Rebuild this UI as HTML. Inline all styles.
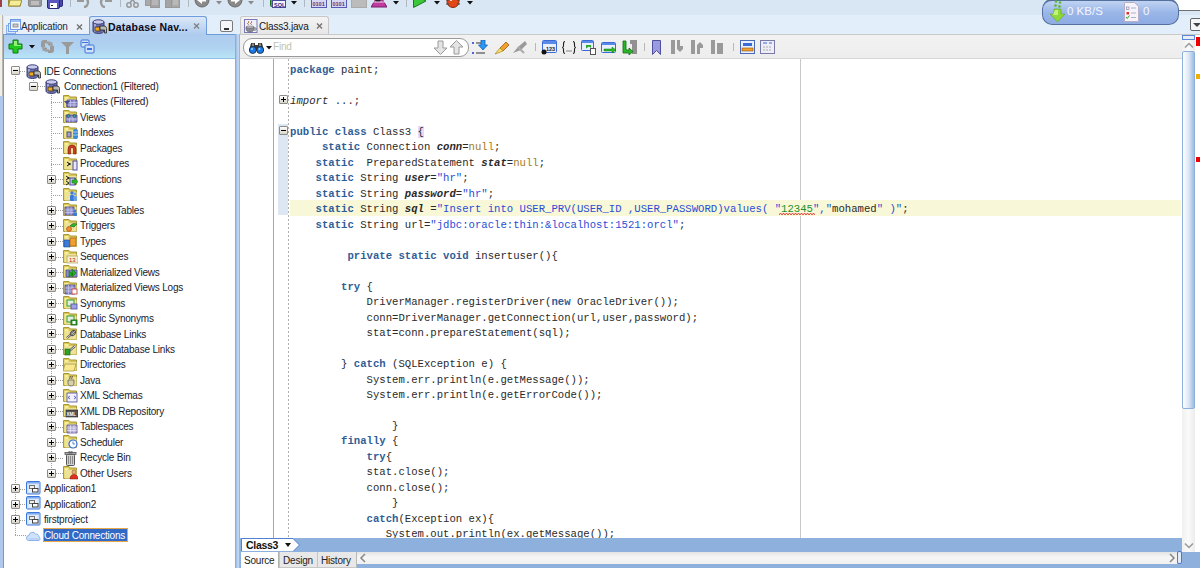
<!DOCTYPE html><html><head><meta charset="utf-8"><style>
*{margin:0;padding:0;box-sizing:border-box}
html,body{width:1200px;height:568px;overflow:hidden;background:#e2eef9;font-family:"Liberation Sans",sans-serif;font-size:10px;color:#000;position:relative}
.a{position:absolute}
.ui{font-family:"Liberation Sans",sans-serif;font-size:10px;letter-spacing:-0.25px;white-space:pre;line-height:12px}
.code{position:absolute;font-family:"Liberation Mono",monospace;font-size:10.63px;white-space:pre;line-height:15.49px;height:15.49px;color:#2a2a2a;left:290px}
.k{color:#2f5e97;font-weight:bold}
.f{font-style:italic;font-weight:bold}
.s{color:#2a4cd6}
.n{color:#a07a1c}
.g{color:#23902e}
.row{position:absolute;height:14px;white-space:pre}
.lbl{position:absolute;font-family:"Liberation Sans",sans-serif;font-size:10px;letter-spacing:-0.2px;white-space:pre;line-height:12px;color:#1a1a2a}
.box{position:absolute;width:9px;height:9px;border:1px solid #8c8c8c;border-radius:1px;background:linear-gradient(#ffffff,#d8d4c8)}
.box:before{content:"";position:absolute;left:1px;top:3px;width:5px;height:1px;background:#000}
.box.p:after{content:"";position:absolute;left:3px;top:1px;width:1px;height:5px;background:#000}
.vd{position:absolute;width:1px;background:repeating-linear-gradient(#a0a0a0 0 1px,transparent 1px 2px)}
.hd{position:absolute;height:1px;background:repeating-linear-gradient(90deg,#a0a0a0 0 1px,transparent 1px 2px)}
</style></head><body>
<div class="a" style="left:0;top:0;width:1200px;height:15px;background:#d9e7f5"></div>
<div class="a" style="left:0;top:15px;width:3px;height:81px;background:#efeee8;border-right:1px solid #b8b8b0"></div>
<div class="a" style="left:0;top:96px;width:3px;height:472px;background:#aec9ec"></div>
<div class="a" style="left:3px;top:15px;width:233px;height:20px;background:#e2eef9"></div>
<div class="a" style="left:3px;top:15px;width:87px;height:20px;background:linear-gradient(#eef3fa,#e6eef8);border:1px solid #dbe5f1;border-bottom:none;border-radius:3px 3px 0 0"></div>
<div class="lbl" style="left:21px;top:21px;color:#1c2a44">Application</div>
<svg class="a" style="left:76px;top:24px" width="7" height="6" viewBox="0 0 7 6"><path d="M1 0.5l5 5M6 0.5l-5 5" stroke="#707070" stroke-width="1.3"/></svg>
<div class="a" style="left:89px;top:16px;width:118px;height:20px;background:linear-gradient(#dce8f7,#abc9ee);border:1px solid #6f9cdc;border-bottom:none;border-radius:3px 3px 0 0"></div>
<div class="lbl" style="left:108px;top:21px;font-weight:bold;font-size:10.5px;letter-spacing:0.2px;color:#0a0a1a">Database Nav...</div>
<svg class="a" style="left:193px;top:23px" width="7" height="6" viewBox="0 0 7 6"><path d="M1 0.5l5 5M6 0.5l-5 5" stroke="#808080" stroke-width="1.3"/></svg>
<div class="a" style="left:220px;top:20px;width:13px;height:12px;border:1px solid #7a7a7a;border-radius:2px;background:#f4f6f9"></div>
<div class="a" style="left:224px;top:28px;width:5px;height:2px;background:#333"></div>
<div class="a" style="left:3px;top:34px;width:233px;height:25px;background:linear-gradient(#aecbee,#b0d3f1 60%,#b8e5f6);border-left:1px solid #6b9bd9;border-bottom:1px solid #92bde6"></div>
<div class="a" style="left:3px;top:34px;width:87px;height:1px;background:#6b9bd9"></div>
<div class="a" style="left:206px;top:34px;width:30px;height:1px;background:#6b9bd9"></div>
<div class="a" style="left:3px;top:59px;width:233px;height:509px;background:#fff;border-left:1px solid #6b9bd9"></div>
<div class="a" style="left:235px;top:34px;width:5px;height:534px;background:linear-gradient(90deg,#7aa3df,#b4cdf0 50%,#c7d9f1);border-right:1px solid #a9b3bf"></div>
<div class="a" style="left:240px;top:15px;width:960px;height:20px;background:#e2eef9"></div>
<div class="a" style="left:240px;top:16px;width:89px;height:19px;background:linear-gradient(#f4f4f4,#e6e6e6);border:1px solid #c8c8c8;border-bottom:none;border-radius:3px 3px 0 0"></div>
<div class="lbl" style="left:259px;top:21px;color:#101828">Class3.java</div>
<svg class="a" style="left:316px;top:23px" width="7" height="6" viewBox="0 0 7 6"><path d="M1 0.5l5 5M6 0.5l-5 5" stroke="#707070" stroke-width="1.3"/></svg>
<div class="a" style="left:240px;top:34px;width:960px;height:25px;background:linear-gradient(#f2f2f2,#ededed);border-top:1px solid #c9c9c9;border-bottom:1px solid #d6d6d6"></div>
<div class="a" style="left:243px;top:38px;width:226px;height:19px;background:#fff;border:1px solid #9a9a9a;border-radius:9px"></div>
<div class="lbl" style="left:273px;top:41px;color:#c0c4b0">Find</div>
<div class="a" style="left:240px;top:59px;width:942px;height:479px;background:#fff"></div>
<div class="a" style="left:273px;top:59px;width:1px;height:479px;background:#a8a8a8"></div>
<div class="vd" style="left:288px;top:59px;height:479px;background:repeating-linear-gradient(#b0b0b0 0 2px,transparent 2px 4px)"></div>
<div class="a" style="left:800px;top:59px;width:1px;height:479px;background:#c8c8c8"></div>
<div class="a" style="left:290px;top:200px;width:891px;height:16px;background:#f8f8d8"></div>
<div class="a" style="left:278px;top:124px;width:10px;height:91px;background:#dde6f3"></div>
<div class="a" style="left:0;top:59px;width:1182px;height:479px;overflow:hidden">
<div class="code" style="top:3.70px"><span class="k">package</span> paint;</div>
<div class="code" style="top:34.68px"><i>import</i> ...;</div>
<div class="code" style="top:65.66px"><span class="k">public</span> <span class="k">class</span> Class3 <span style="background:#e8d8f8">{</span></div>
<div class="code" style="top:81.15px">     <span class="k">static</span> Connection <span class="f">conn</span>=<span class="n">null</span>;</div>
<div class="code" style="top:96.64px">    <span class="k">static</span>  PreparedStatement <span class="f">stat</span>=<span class="n">null</span>;</div>
<div class="code" style="top:112.13px">    <span class="k">static</span> String <span class="f">user</span>=<span class="s">"hr"</span>;</div>
<div class="code" style="top:127.62px">    <span class="k">static</span> String <span class="f">password</span>=<span class="s">"hr"</span>;</div>
<div class="code" style="top:143.11px">    <span class="k">static</span> String <span class="f">sql</span> =<span class="s">"Insert into USER_PRV(USER_ID ,USER_PASSWORD)values( "</span><span class="g">12345</span><span class="s">","</span>mohamed<span class="s">" )"</span>;</div>
<div class="code" style="top:158.60px">    <span class="k">static</span> String url=<span class="s">"jdbc:oracle:thin:&amp;localhost:1521:orcl"</span>;</div>
<div class="code" style="top:189.58px">         <span class="k">private</span> <span class="k">static</span> <span class="k">void</span> insertuser(){</div>
<div class="code" style="top:220.56px">        <span class="k">try</span> {</div>
<div class="code" style="top:236.05px">            DriverManager.registerDriver(<span class="k">new</span> OracleDriver());</div>
<div class="code" style="top:251.54px">            conn=DriverManager.getConnection(url,user,password);</div>
<div class="code" style="top:267.03px">            stat=conn.prepareStatement(sql);</div>
<div class="code" style="top:298.01px">        } <span class="k">catch</span> (SQLException e) {</div>
<div class="code" style="top:313.50px">            System.err.println(e.getMessage());</div>
<div class="code" style="top:328.99px">            System.err.println(e.getErrorCode());</div>
<div class="code" style="top:359.97px">                }</div>
<div class="code" style="top:375.46px">        <span class="k">finally</span> {</div>
<div class="code" style="top:390.95px">            <span class="k">try</span>{</div>
<div class="code" style="top:406.44px">            stat.close();</div>
<div class="code" style="top:421.93px">            conn.close();</div>
<div class="code" style="top:437.42px">                }</div>
<div class="code" style="top:452.91px">            <span class="k">catch</span>(Exception ex){</div>
<div class="code" style="top:468.40px">               System.out.println(ex.getMessage());</div>
</div>
<div class="box p" style="left:279px;top:95px"></div>
<div class="box" style="left:279px;top:126px"></div>
<svg class="a" style="left:779px;top:212px" width="36" height="4" viewBox="0 0 36 4"><path d="M0 3l1.5-2 1.5 2l1.5-2 1.5 2l1.5-2 1.5 2l1.5-2 1.5 2l1.5-2 1.5 2l1.5-2 1.5 2l1.5-2 1.5 2l1.5-2 1.5 2l1.5-2 1.5 2l1.5-2 1.5 2l1.5-2 1.5 2l1.5-2 1.5 2" stroke="#e02020" stroke-width="0.8" fill="none"/></svg>
<div class="a" style="left:240px;top:538px;width:942px;height:14px;background:#8db0dc"></div>
<svg class="a" style="left:240px;top:537px" width="62" height="16" viewBox="0 0 62 16"><path d="M1.5 1.5H53L59.5 8 53 14.5H1.5z" fill="#fff" stroke="#4f82d2" stroke-width="1"/></svg>
<div class="lbl" style="left:246px;top:539px;font-weight:bold;font-size:10.5px;letter-spacing:-0.3px;color:#111">Class3</div>
<div class="a" style="left:285px;top:543px;width:0;height:0;border-left:3px solid transparent;border-right:3px solid transparent;border-top:4px solid #111"></div>
<div class="a" style="left:240px;top:551px;width:960px;height:17px;background:#8db0dc"></div>
<div class="a" style="left:241px;top:552px;width:38px;height:16px;background:#fff;border-right:1px solid #b0b0b0"></div>
<div class="lbl" style="left:244px;top:555px;color:#222">Source</div>
<div class="a" style="left:279px;top:552px;width:39px;height:16px;background:#e8e8e8;border-left:1px solid #c4c4c4;border-right:1px solid #b8b8b8;border-bottom:1px solid #c8c8c8"></div>
<div class="lbl" style="left:283px;top:555px;color:#222">Design</div>
<div class="a" style="left:317px;top:552px;width:40px;height:16px;background:#e8e8e8;border-left:1px solid #c4c4c4;border-right:1px solid #b8b8b8;border-bottom:1px solid #c8c8c8"></div>
<div class="lbl" style="left:321px;top:555px;color:#222">History</div>
<div class="a" style="left:357px;top:552px;width:820px;height:12px;background:linear-gradient(#e4e4e4,#f6f6f6 45%,#f0f0f0)"></div>
<svg class="a" style="left:359px;top:553px" width="8" height="10" viewBox="0 0 8 10"><path d="M6 1L2 5l4 4" stroke="#8a8a8a" stroke-width="1.6" fill="none"/></svg>
<svg class="a" style="left:1168px;top:553px" width="8" height="10" viewBox="0 0 8 10"><path d="M2 1l4 4-4 4" stroke="#8a8a8a" stroke-width="1.6" fill="none"/></svg>
<div class="a" style="left:1177px;top:551px;width:5px;height:13px;border:1px solid #4a7ad0;border-radius:2px;background:#e4ecf7"></div>
<div class="a" style="left:1182px;top:35px;width:13px;height:517px;background:linear-gradient(90deg,#f0f0f0,#fafafa 50%,#ececec)"></div>
<div class="a" style="left:1182px;top:35px;width:13px;height:5px;border:1px solid #5a88d6;background:#e8eff9"></div>
<div class="a" style="left:1182px;top:51px;width:13px;height:358px;border:1px solid #8fb0da;border-radius:2px;background:linear-gradient(90deg,#ffffff,#dce8f6 50%,#9dbde3)"></div>
<div class="a" style="left:1195px;top:35px;width:5px;height:517px;background:#fff"></div>
<svg class="a" style="left:1184px;top:42px" width="10" height="7" viewBox="0 0 10 7"><path d="M1 5.5l4-4 4 4" stroke="#999" stroke-width="1.5" fill="none"/></svg>
<svg class="a" style="left:1184px;top:542px" width="10" height="7" viewBox="0 0 10 7"><path d="M1 1.5l4 4 4-4" stroke="#999" stroke-width="1.5" fill="none"/></svg>
<div class="a" style="left:1196px;top:37px;width:4px;height:9px;background:#ee0000"></div>
<div class="a" style="left:1196px;top:74px;width:4px;height:5px;background:#f0b000"></div>
<div class="a" style="left:1196px;top:157px;width:4px;height:5px;background:#ee0000"></div>
<div class="vd" style="left:15px;top:76px;height:459px"></div>
<div class="vd" style="left:33px;top:76px;height:5px"></div>
<div class="vd" style="left:51px;top:91px;height:382px"></div>
<div class="hd" style="left:20px;top:71px;width:6px"></div>
<div class="box" style="left:11px;top:66px"></div>
<svg class="a" style="left:26px;top:64px" width="15" height="15" viewBox="0 0 15 15"><path d="M1 3v9c0 1.5 2.5 2.5 5.5 2.5S12 13.5 12 12V3z" fill="#6a6fb0" stroke="#3a3d70"/><ellipse cx="6.5" cy="3" rx="5.5" ry="2.2" fill="#c9cbee" stroke="#3a3d70"/><path d="M3 5v8" stroke="#b8bbe6" stroke-width="1.5"/><rect x="3" y="8" width="5" height="4" fill="#f0a81c" stroke="#333" stroke-width="0.8"/><path d="M8 7h4c1.5 0 2.5 1 2.5 2.5V14h-2v-3H8z" fill="#b8b8b8" stroke="#222" stroke-width="0.8"/></svg>
<div class="lbl" style="left:44px;top:65.5px">IDE Connections</div>
<div class="hd" style="left:38px;top:86px;width:7px"></div>
<div class="box" style="left:29px;top:82px"></div>
<svg class="a" style="left:45px;top:79px" width="15" height="15" viewBox="0 0 15 15"><path d="M1 3v9c0 1.5 2.5 2.5 5.5 2.5S12 13.5 12 12V3z" fill="#6a6fb0" stroke="#3a3d70"/><ellipse cx="6.5" cy="3" rx="5.5" ry="2.2" fill="#c9cbee" stroke="#3a3d70"/><path d="M3 5v8" stroke="#b8bbe6" stroke-width="1.5"/><rect x="3" y="8" width="5" height="4" fill="#f0a81c" stroke="#333" stroke-width="0.8"/><path d="M8 7h4c1.5 0 2.5 1 2.5 2.5V14h-2v-3H8z" fill="#b8b8b8" stroke="#222" stroke-width="0.8"/></svg>
<div class="lbl" style="left:64px;top:81.0px">Connection1 (Filtered)</div>
<div class="hd" style="left:51px;top:102px;width:12px"></div>
<svg class="a" style="left:63px;top:95px" width="15" height="15" viewBox="0 0 15 15"><path d="M0.5 0.5h5.5l1.5 1.5h6v10.5h-13z" fill="#d8c658" stroke="#a89838"/><path d="M1.5 2h4v10h-4z" fill="#f6ee9a"/><path d="M2 4h11.5v8.5H2z" fill="#ece29a"/><g transform="translate(0,-2)"><path d="M4 7h10v7H4z" fill="#8c8ccc" stroke="#4a4a8a" stroke-width="0.8"/><path d="M4 9.5h10M4 12h10M7.5 7v7M11 7v7" stroke="#d8d8f0" stroke-width="0.6"/><path d="M1 8h6l-2.5 3v3h-1v-3z" fill="#4848a0"/></g></svg>
<div class="lbl" style="left:80px;top:96.4px">Tables (Filtered)</div>
<div class="hd" style="left:51px;top:117px;width:12px"></div>
<svg class="a" style="left:63px;top:110px" width="15" height="15" viewBox="0 0 15 15"><path d="M0.5 0.5h5.5l1.5 1.5h6v10.5h-13z" fill="#d8c658" stroke="#a89838"/><path d="M1.5 2h4v10h-4z" fill="#f6ee9a"/><path d="M2 4h11.5v8.5H2z" fill="#ece29a"/><g transform="translate(0,-2)"><path d="M3 7h11v7H3z" fill="#9494d4" stroke="#4a4a8a" stroke-width="0.8"/><path d="M3 11h11M6.5 9v5M10 9v5" stroke="#d8d8f0" stroke-width="0.6"/><circle cx="5.5" cy="8" r="1.6" fill="#3aa0a0" stroke="#222" stroke-width="0.5"/><circle cx="11.5" cy="8" r="1.6" fill="#3aa0a0" stroke="#222" stroke-width="0.5"/></g></svg>
<div class="lbl" style="left:80px;top:111.9px">Views</div>
<div class="hd" style="left:51px;top:133px;width:12px"></div>
<svg class="a" style="left:63px;top:126px" width="15" height="15" viewBox="0 0 15 15"><path d="M0.5 0.5h5.5l1.5 1.5h6v10.5h-13z" fill="#d8c658" stroke="#a89838"/><path d="M1.5 2h4v10h-4z" fill="#f6ee9a"/><path d="M2 4h11.5v8.5H2z" fill="#ece29a"/><g transform="translate(0,-2)"><rect x="4" y="8" width="4" height="5" fill="#a0a0e0" stroke="#555"/><rect x="10" y="5" width="5" height="10" rx="2" fill="#3a8ad8"/><path d="M10 8h5M10 11h5" stroke="#cde" stroke-width="0.8"/></g></svg>
<div class="lbl" style="left:80px;top:127.4px">Indexes</div>
<div class="hd" style="left:51px;top:148px;width:12px"></div>
<svg class="a" style="left:63px;top:141px" width="15" height="15" viewBox="0 0 15 15"><path d="M0.5 0.5h5.5l1.5 1.5h6v10.5h-13z" fill="#d8c658" stroke="#a89838"/><path d="M1.5 2h4v10h-4z" fill="#f6ee9a"/><path d="M2 4h11.5v8.5H2z" fill="#ece29a"/><g transform="translate(0,-2)"><path d="M5 15v-5a4 4 0 0 1 8 0v5h-2.5v-5a1.5 1.5 0 0 0-3 0v5z" fill="#d03a20" stroke="#7a1a10" stroke-width="0.6"/></g></svg>
<div class="lbl" style="left:80px;top:142.9px">Packages</div>
<div class="hd" style="left:51px;top:164px;width:12px"></div>
<svg class="a" style="left:63px;top:157px" width="15" height="15" viewBox="0 0 15 15"><path d="M0.5 0.5h5.5l1.5 1.5h6v10.5h-13z" fill="#d8c658" stroke="#a89838"/><path d="M1.5 2h4v10h-4z" fill="#f6ee9a"/><path d="M2 4h11.5v8.5H2z" fill="#ece29a"/><g transform="translate(0,-2)"><path d="M4 7l3 2-3 2M5 9h3" stroke="#111" stroke-width="1" fill="none"/><rect x="10" y="6" width="4" height="9" fill="#e8e8ff" stroke="#5050a0"/></g></svg>
<div class="lbl" style="left:80px;top:158.3px">Procedures</div>
<div class="hd" style="left:56px;top:179px;width:7px"></div>
<div class="box p" style="left:47px;top:175px"></div>
<svg class="a" style="left:63px;top:172px" width="15" height="15" viewBox="0 0 15 15"><path d="M0.5 0.5h5.5l1.5 1.5h6v10.5h-13z" fill="#d8c658" stroke="#a89838"/><path d="M1.5 2h4v10h-4z" fill="#f6ee9a"/><path d="M2 4h11.5v8.5H2z" fill="#ece29a"/><g transform="translate(0,-2)"><path d="M3 6l3 2-3 2M4 8h3M3 11l3 2-3 2" stroke="#111" stroke-width="0.9" fill="none"/><rect x="7" y="8" width="5" height="7" fill="#c8c8f0" stroke="#5050a0"/><path d="M9 10h3V8l3 3.5-3 3.5v-2H9z" fill="#2cba2c" stroke="#0a6a0a" stroke-width="0.5"/></g></svg>
<div class="lbl" style="left:80px;top:173.8px">Functions</div>
<div class="hd" style="left:51px;top:195px;width:12px"></div>
<svg class="a" style="left:63px;top:188px" width="15" height="15" viewBox="0 0 15 15"><path d="M0.5 0.5h5.5l1.5 1.5h6v10.5h-13z" fill="#d8c658" stroke="#a89838"/><path d="M1.5 2h4v10h-4z" fill="#f6ee9a"/><path d="M2 4h11.5v8.5H2z" fill="#ece29a"/><g transform="translate(0,-2)"><circle cx="9" cy="7" r="1.7" fill="#3a7ad8"/><rect x="7" y="9" width="4" height="6" rx="1" fill="#3a7ad8"/><circle cx="12" cy="8" r="1.4" fill="#6aa0e8"/><rect x="10.5" y="10" width="3.5" height="5" rx="1" fill="#6aa0e8"/></g></svg>
<div class="lbl" style="left:80px;top:189.3px">Queues</div>
<div class="hd" style="left:56px;top:210px;width:7px"></div>
<div class="box p" style="left:47px;top:206px"></div>
<svg class="a" style="left:63px;top:203px" width="15" height="15" viewBox="0 0 15 15"><path d="M0.5 0.5h5.5l1.5 1.5h6v10.5h-13z" fill="#d8c658" stroke="#a89838"/><path d="M1.5 2h4v10h-4z" fill="#f6ee9a"/><path d="M2 4h11.5v8.5H2z" fill="#ece29a"/><g transform="translate(0,-2)"><path d="M2 6h9v8H2z" fill="#8c8ccc" stroke="#4a4a8a" stroke-width="0.8"/><path d="M2 9h9M2 11.5h9M5 6v8M8 6v8" stroke="#d8d8f0" stroke-width="0.6"/><circle cx="12" cy="10" r="1.4" fill="#3a7ad8"/><rect x="10.5" y="11.5" width="3.5" height="3.5" rx="1" fill="#3a7ad8"/></g></svg>
<div class="lbl" style="left:80px;top:204.7px">Queues Tables</div>
<div class="hd" style="left:56px;top:226px;width:7px"></div>
<div class="box p" style="left:47px;top:221px"></div>
<svg class="a" style="left:63px;top:219px" width="15" height="15" viewBox="0 0 15 15"><path d="M0.5 0.5h5.5l1.5 1.5h6v10.5h-13z" fill="#d8c658" stroke="#a89838"/><path d="M1.5 2h4v10h-4z" fill="#f6ee9a"/><path d="M2 4h11.5v8.5H2z" fill="#ece29a"/><g transform="translate(0,-2)"><circle cx="6" cy="12" r="2.5" fill="#f09030" stroke="#a04010" stroke-width="0.6"/><path d="M7 9c2-3 5-3 7-2l-3 3z" fill="#30b030" stroke="#106010" stroke-width="0.6"/></g></svg>
<div class="lbl" style="left:80px;top:220.2px">Triggers</div>
<div class="hd" style="left:56px;top:241px;width:7px"></div>
<div class="box p" style="left:47px;top:237px"></div>
<svg class="a" style="left:63px;top:234px" width="15" height="15" viewBox="0 0 15 15"><path d="M0.5 0.5h5.5l1.5 1.5h6v10.5h-13z" fill="#d8c658" stroke="#a89838"/><path d="M1.5 2h4v10h-4z" fill="#f6ee9a"/><path d="M2 4h11.5v8.5H2z" fill="#ece29a"/><g transform="translate(0,-2)"><rect x="1" y="8" width="6" height="7" fill="#3a7ad8" stroke="#1a4a98" stroke-width="0.6"/><rect x="7" y="6" width="6" height="8" fill="#f0a030" stroke="#a05010" stroke-width="0.6"/></g></svg>
<div class="lbl" style="left:80px;top:235.7px">Types</div>
<div class="hd" style="left:56px;top:257px;width:7px"></div>
<div class="box p" style="left:47px;top:252px"></div>
<svg class="a" style="left:63px;top:250px" width="15" height="15" viewBox="0 0 15 15"><path d="M0.5 0.5h5.5l1.5 1.5h6v10.5h-13z" fill="#d8c658" stroke="#a89838"/><path d="M1.5 2h4v10h-4z" fill="#f6ee9a"/><path d="M2 4h11.5v8.5H2z" fill="#ece29a"/><g transform="translate(0,-2)"><rect x="4" y="8" width="11" height="7" fill="#f4f0d0" stroke="#a09040" stroke-width="0.6"/><text x="6" y="14" font-size="6" font-family="Liberation Sans" fill="#c02020">13</text></g></svg>
<div class="lbl" style="left:80px;top:251.1px">Sequences</div>
<div class="hd" style="left:56px;top:272px;width:7px"></div>
<div class="box p" style="left:47px;top:268px"></div>
<svg class="a" style="left:63px;top:265px" width="15" height="15" viewBox="0 0 15 15"><path d="M0.5 0.5h5.5l1.5 1.5h6v10.5h-13z" fill="#d8c658" stroke="#a89838"/><path d="M1.5 2h4v10h-4z" fill="#f6ee9a"/><path d="M2 4h11.5v8.5H2z" fill="#ece29a"/><g transform="translate(0,-2)"><path d="M3 7h11v7H3z" fill="#8c8ccc" stroke="#4a4a8a" stroke-width="0.8"/><path d="M6 8l4 3-4 3zM9 6l4 4-4 4z" fill="#20b020" stroke="#0a600a" stroke-width="0.5"/></g></svg>
<div class="lbl" style="left:80px;top:266.6px">Materialized Views</div>
<div class="hd" style="left:56px;top:288px;width:7px"></div>
<div class="box p" style="left:47px;top:283px"></div>
<svg class="a" style="left:63px;top:281px" width="15" height="15" viewBox="0 0 15 15"><path d="M0.5 0.5h5.5l1.5 1.5h6v10.5h-13z" fill="#d8c658" stroke="#a89838"/><path d="M1.5 2h4v10h-4z" fill="#f6ee9a"/><path d="M2 4h11.5v8.5H2z" fill="#ece29a"/><g transform="translate(0,-2)"><path d="M2 6h10v9H2z" fill="#8c8ccc" stroke="#4a4a8a" stroke-width="0.8"/><path d="M2 9h10M2 12h10M5.5 6v9M9 6v9" stroke="#d8d8f0" stroke-width="0.6"/><rect x="9" y="10" width="5" height="5" fill="#fff" stroke="#c03030" stroke-width="0.8"/></g></svg>
<div class="lbl" style="left:80px;top:282.1px">Materialized Views Logs</div>
<div class="hd" style="left:56px;top:303px;width:7px"></div>
<div class="box p" style="left:47px;top:299px"></div>
<svg class="a" style="left:63px;top:296px" width="15" height="15" viewBox="0 0 15 15"><path d="M0.5 0.5h5.5l1.5 1.5h6v10.5h-13z" fill="#d8c658" stroke="#a89838"/><path d="M1.5 2h4v10h-4z" fill="#f6ee9a"/><path d="M2 4h11.5v8.5H2z" fill="#ece29a"/><g transform="translate(0,-2)"><rect x="4" y="6" width="7" height="6" fill="#e0f0e0" stroke="#30a030"/><rect x="8" y="10" width="6" height="5" fill="#a0a0e8" stroke="#4a4a9a" stroke-width="0.8"/></g></svg>
<div class="lbl" style="left:80px;top:297.6px">Synonyms</div>
<div class="hd" style="left:56px;top:319px;width:7px"></div>
<div class="box p" style="left:47px;top:314px"></div>
<svg class="a" style="left:63px;top:312px" width="15" height="15" viewBox="0 0 15 15"><path d="M0.5 0.5h5.5l1.5 1.5h6v10.5h-13z" fill="#d8c658" stroke="#a89838"/><path d="M1.5 2h4v10h-4z" fill="#f6ee9a"/><path d="M2 4h11.5v8.5H2z" fill="#ece29a"/><g transform="translate(0,-2)"><rect x="4" y="6" width="7" height="6" fill="#e0f0e0" stroke="#30a030"/><rect x="8" y="10" width="6" height="5" fill="#30a030" stroke="#106010" stroke-width="0.8"/><rect x="9.5" y="11" width="3" height="3" fill="#fff"/></g></svg>
<div class="lbl" style="left:80px;top:313.0px">Public Synonyms</div>
<div class="hd" style="left:56px;top:334px;width:7px"></div>
<div class="box p" style="left:47px;top:329px"></div>
<svg class="a" style="left:63px;top:327px" width="15" height="15" viewBox="0 0 15 15"><path d="M0.5 0.5h5.5l1.5 1.5h6v10.5h-13z" fill="#d8c658" stroke="#a89838"/><path d="M1.5 2h4v10h-4z" fill="#f6ee9a"/><path d="M2 4h11.5v8.5H2z" fill="#ece29a"/><g transform="translate(0,-2)"><path d="M4 13l8-7" stroke="#444" stroke-width="2.2"/><path d="M4 13l8-7" stroke="#e8e8e8" stroke-width="1"/><ellipse cx="10" cy="8" rx="3" ry="2" fill="none" stroke="#555" transform="rotate(-40 10 8)"/></g></svg>
<div class="lbl" style="left:80px;top:328.5px">Database Links</div>
<div class="hd" style="left:56px;top:349px;width:7px"></div>
<div class="box p" style="left:47px;top:345px"></div>
<svg class="a" style="left:63px;top:342px" width="15" height="15" viewBox="0 0 15 15"><path d="M0.5 0.5h5.5l1.5 1.5h6v10.5h-13z" fill="#d8c658" stroke="#a89838"/><path d="M1.5 2h4v10h-4z" fill="#f6ee9a"/><path d="M2 4h11.5v8.5H2z" fill="#ece29a"/><g transform="translate(0,-2)"><path d="M4 13l8-7" stroke="#444" stroke-width="2.2"/><path d="M4 13l8-7" stroke="#e8e8e8" stroke-width="1"/><rect x="2" y="9" width="5" height="6" fill="#30a030" stroke="#106010" stroke-width="0.6"/></g></svg>
<div class="lbl" style="left:80px;top:344.0px">Public Database Links</div>
<div class="hd" style="left:56px;top:365px;width:7px"></div>
<div class="box p" style="left:47px;top:360px"></div>
<svg class="a" style="left:63px;top:358px" width="15" height="15" viewBox="0 0 15 15"><path d="M0.5 0.5h5.5l1.5 1.5h6v10.5h-13z" fill="#d8c658" stroke="#a89838"/><path d="M1.5 2h4v10h-4z" fill="#f6ee9a"/><path d="M2 4h11.5v8.5H2z" fill="#ece29a"/><g transform="translate(0,-2)"><path d="M2 8h11l-2 7H0z" fill="#f8e890" stroke="#a8983a" stroke-width="0.8"/></g></svg>
<div class="lbl" style="left:80px;top:359.4px">Directories</div>
<div class="hd" style="left:56px;top:380px;width:7px"></div>
<div class="box p" style="left:47px;top:376px"></div>
<svg class="a" style="left:63px;top:373px" width="15" height="15" viewBox="0 0 15 15"><path d="M0.5 0.5h5.5l1.5 1.5h6v10.5h-13z" fill="#d8c658" stroke="#a89838"/><path d="M1.5 2h4v10h-4z" fill="#f6ee9a"/><path d="M2 4h11.5v8.5H2z" fill="#ece29a"/><g transform="translate(0,-2)"><path d="M5 9h6v3c0 2-1.2 3-3 3s-3-1-3-3z" fill="#d8d0a8" stroke="#555" stroke-width="0.7"/><path d="M7 5c1 1-1 2 0 3M9 5c1 1-1 2 0 3" stroke="#222" stroke-width="0.8" fill="none"/></g></svg>
<div class="lbl" style="left:80px;top:374.9px">Java</div>
<div class="hd" style="left:56px;top:396px;width:7px"></div>
<div class="box p" style="left:47px;top:391px"></div>
<svg class="a" style="left:63px;top:389px" width="15" height="15" viewBox="0 0 15 15"><path d="M0.5 0.5h5.5l1.5 1.5h6v10.5h-13z" fill="#d8c658" stroke="#a89838"/><path d="M1.5 2h4v10h-4z" fill="#f6ee9a"/><path d="M2 4h11.5v8.5H2z" fill="#ece29a"/><g transform="translate(0,-2)"><rect x="4" y="6" width="10" height="9" fill="#f0f0ff" stroke="#4a4a9a" stroke-width="0.8"/><path d="M7 9l-2 1.5 2 1.5M11 9l2 1.5-2 1.5" stroke="#3a3ab0" stroke-width="0.8" fill="none"/></g></svg>
<div class="lbl" style="left:80px;top:390.4px">XML Schemas</div>
<div class="hd" style="left:56px;top:411px;width:7px"></div>
<div class="box p" style="left:47px;top:407px"></div>
<svg class="a" style="left:63px;top:404px" width="15" height="15" viewBox="0 0 15 15"><path d="M0.5 0.5h5.5l1.5 1.5h6v10.5h-13z" fill="#d8c658" stroke="#a89838"/><path d="M1.5 2h4v10h-4z" fill="#f6ee9a"/><path d="M2 4h11.5v8.5H2z" fill="#ece29a"/><g transform="translate(0,-2)"><rect x="3" y="8" width="12" height="7" fill="#555" stroke="#222" stroke-width="0.6"/><text x="3.5" y="13.5" font-size="4.5" font-family="Liberation Sans" font-weight="bold" fill="#fff">XML</text></g></svg>
<div class="lbl" style="left:80px;top:405.8px">XML DB Repository</div>
<div class="hd" style="left:56px;top:427px;width:7px"></div>
<div class="box p" style="left:47px;top:422px"></div>
<svg class="a" style="left:63px;top:420px" width="15" height="15" viewBox="0 0 15 15"><path d="M0.5 0.5h5.5l1.5 1.5h6v10.5h-13z" fill="#d8c658" stroke="#a89838"/><path d="M1.5 2h4v10h-4z" fill="#f6ee9a"/><path d="M2 4h11.5v8.5H2z" fill="#ece29a"/><g transform="translate(0,-2)"><path d="M4 7h10v8H4z" fill="#b8b0e0" stroke="#5a5090" stroke-width="0.8"/><path d="M4 10h10M4 12.5h10M7.5 7v8M11 7v8" stroke="#eee" stroke-width="0.6"/></g></svg>
<div class="lbl" style="left:80px;top:421.3px">Tablespaces</div>
<div class="hd" style="left:56px;top:442px;width:7px"></div>
<div class="box p" style="left:47px;top:438px"></div>
<svg class="a" style="left:63px;top:435px" width="15" height="15" viewBox="0 0 15 15"><path d="M0.5 0.5h5.5l1.5 1.5h6v10.5h-13z" fill="#d8c658" stroke="#a89838"/><path d="M1.5 2h4v10h-4z" fill="#f6ee9a"/><path d="M2 4h11.5v8.5H2z" fill="#ece29a"/><g transform="translate(0,-2)"><circle cx="10" cy="11" r="4" fill="#fff" stroke="#2a6ad0" stroke-width="1.2"/><path d="M10 8.5v2.5h2" stroke="#2a6ad0" stroke-width="0.8" fill="none"/></g></svg>
<div class="lbl" style="left:80px;top:436.8px">Scheduler</div>
<div class="hd" style="left:56px;top:458px;width:7px"></div>
<div class="box p" style="left:47px;top:453px"></div>
<svg class="a" style="left:63px;top:451px" width="15" height="15" viewBox="0 0 15 15"><rect x="3.5" y="3.5" width="8" height="11" rx="1" fill="#d0d0d0" stroke="#555"/><path d="M5.5 5v8M7.5 5v8M9.5 5v8" stroke="#777" stroke-width="0.8"/><rect x="2" y="1.5" width="11" height="2" fill="#aaa" stroke="#555" stroke-width="0.8"/><rect x="6" y="0" width="3" height="2" fill="none" stroke="#555" stroke-width="0.8"/></svg>
<div class="lbl" style="left:80px;top:452.2px">Recycle Bin</div>
<div class="hd" style="left:56px;top:473px;width:7px"></div>
<div class="box p" style="left:47px;top:469px"></div>
<svg class="a" style="left:63px;top:466px" width="15" height="15" viewBox="0 0 15 15"><path d="M0.5 0.5h5.5l1.5 1.5h6v10.5h-13z" fill="#d8c658" stroke="#a89838"/><path d="M1.5 2h4v10h-4z" fill="#f6ee9a"/><path d="M2 4h11.5v8.5H2z" fill="#ece29a"/><g transform="translate(0,-2)"><circle cx="11" cy="8" r="2" fill="#f0b080" stroke="#804020" stroke-width="0.5"/><path d="M7 15c0-3 1.5-4.5 4-4.5s4 1.5 4 4.5z" fill="#e03020" stroke="#801010" stroke-width="0.5"/></g></svg>
<div class="lbl" style="left:80px;top:467.7px">Other Users</div>
<div class="hd" style="left:20px;top:489px;width:6px"></div>
<div class="box p" style="left:11px;top:484px"></div>
<svg class="a" style="left:26px;top:481px" width="15" height="14" viewBox="0 0 15 14"><rect x="0.5" y="0.5" width="13.5" height="12.5" rx="1" fill="#cfe1fa" stroke="#3a78dc"/><rect x="1" y="1" width="12.5" height="1.5" fill="#7eaaf0"/><rect x="2.5" y="3.5" width="9" height="8" fill="#e8f2fe"/><rect x="3.5" y="4.5" width="5" height="3" fill="#f0f0f0" stroke="#707070"/><rect x="6.5" y="7.5" width="5.5" height="3.5" fill="#fff" stroke="#404040"/></svg>
<div class="lbl" style="left:44px;top:483.2px">Application1</div>
<div class="hd" style="left:20px;top:504px;width:6px"></div>
<div class="box p" style="left:11px;top:500px"></div>
<svg class="a" style="left:26px;top:496px" width="15" height="14" viewBox="0 0 15 14"><rect x="0.5" y="0.5" width="13.5" height="12.5" rx="1" fill="#cfe1fa" stroke="#3a78dc"/><rect x="1" y="1" width="12.5" height="1.5" fill="#7eaaf0"/><rect x="2.5" y="3.5" width="9" height="8" fill="#e8f2fe"/><rect x="3.5" y="4.5" width="5" height="3" fill="#f0f0f0" stroke="#707070"/><rect x="6.5" y="7.5" width="5.5" height="3.5" fill="#fff" stroke="#404040"/></svg>
<div class="lbl" style="left:44px;top:498.7px">Application2</div>
<div class="hd" style="left:20px;top:520px;width:6px"></div>
<div class="box p" style="left:11px;top:515px"></div>
<svg class="a" style="left:26px;top:512px" width="15" height="14" viewBox="0 0 15 14"><rect x="0.5" y="0.5" width="13.5" height="12.5" rx="1" fill="#cfe1fa" stroke="#3a78dc"/><rect x="1" y="1" width="12.5" height="1.5" fill="#7eaaf0"/><rect x="2.5" y="3.5" width="9" height="8" fill="#e8f2fe"/><rect x="3.5" y="4.5" width="5" height="3" fill="#f0f0f0" stroke="#707070"/><rect x="6.5" y="7.5" width="5.5" height="3.5" fill="#fff" stroke="#404040"/></svg>
<div class="lbl" style="left:44px;top:514.1px">firstproject</div>
<div class="hd" style="left:15px;top:535px;width:11px"></div>
<svg class="a" style="left:26px;top:528px" width="15" height="15" viewBox="0 0 15 15"><path d="M3 12.5a2.5 2.5 0 0 1 0-5 3.5 3.5 0 0 1 6.5-1.5 3 3 0 0 1 3.5 3 2 2 0 0 1 0 3.5z" fill="#cfe2fb" stroke="#8ab4ea"/><path d="M3 11h10" stroke="#8ab4ea" stroke-width="0.6"/></svg>
<div class="a" style="left:43px;top:528px;width:85px;height:14px;background:#3169c6;border:1px solid #e8a848"></div>
<div class="lbl" style="left:44px;top:529.6px;color:#fff">Cloud Connections</div>
<div class="a" style="left:1170px;top:0;width:30px;height:10px;background:#fff"></div>
<div class="a" style="left:1170px;top:10px;width:30px;height:1px;background:#707070"></div>
<div class="a" style="left:1042px;top:-1px;width:137px;height:26px;border-radius:10px;background:linear-gradient(#c0d3f2,#9ab6e8 50%,#8eabe3);border:1px solid #56709e;border-top:2px solid #56709e"></div>
<div class="lbl" style="left:1067px;top:5px;color:#f4f6ff;font-size:11.5px;letter-spacing:0">0 KB/S</div>
<div class="lbl" style="left:1143px;top:5px;color:#f4f6ff;font-size:11.5px;letter-spacing:0">0</div>
<svg class="a" style="left:1124px;top:2px" width="15" height="20" viewBox="0 0 15 20"><path d="M0.5 0.5h10l4 4v15H0.5z" fill="#f6f4fa" stroke="#b8b0c8"/><rect x="2.5" y="5" width="2.5" height="2.5" fill="none" stroke="#8a8ab0" stroke-width="0.7"/><rect x="2.5" y="10" width="2.5" height="2.5" fill="#e03030"/><path d="M2 15l1.2 1.5 2.3-3" stroke="#30a030" stroke-width="1" fill="none"/><path d="M7 6h5M7 11h5M7 15.5h5" stroke="#9aa0c0" stroke-width="0.8"/></svg>
<svg class="a" style="left:1050px;top:0px" width="16" height="23" viewBox="0 0 16 23"><circle cx="6" cy="1.5" r="1.3" fill="#58b830"/><circle cx="10" cy="2.5" r="1.3" fill="#58b830"/><circle cx="5.5" cy="5.5" r="1.3" fill="#58b830"/><circle cx="9.5" cy="6.5" r="1.3" fill="#58b830"/><path d="M4 9h7v5h4l-7.5 8L0 14h4z" fill="#8ed83a" stroke="#5aa82a" stroke-width="0.6"/><path d="M5 10h3v5H3z" fill="#c8f080"/></svg>
<div class="a" style="left:1190px;top:18px;width:12px;height:13px;border:1px solid #666;border-radius:2px;background:#f4f6f9"></div>
<div class="a" style="left:1193px;top:23px;width:0;height:0;border-left:4px solid transparent;border-right:4px solid transparent;border-top:4px solid #444"></div>
<div class="a" style="left:0px;top:0px;width:2px;height:7px;background:#a04040;border-radius:0px"></div><svg class="a" style="left:8px;top:-6px" width="14" height="13" viewBox="0 0 14 13"><path d="M0.5 1.5h5l1 1.5h6v9h-12z" fill="#d8c860" stroke="#9a8a30"/><path d="M2 6h12l-2 6H0.5z" fill="#f4ec98" stroke="#9a8a30"/></svg><svg class="a" style="left:28px;top:-6px" width="14" height="13" viewBox="0 0 14 13"><rect x="0.5" y="0.5" width="13" height="12" rx="1.5" fill="#9a9a9a" stroke="#888"/><rect x="3" y="7" width="8" height="4" fill="#bdbdbd"/></svg><svg class="a" style="left:47px;top:-6px" width="16" height="15" viewBox="0 0 16 15"><rect x="3.5" y="0.5" width="12" height="12" rx="1.5" fill="#4a48a8" stroke="#2a2878"/><rect x="0.5" y="2.5" width="12" height="12" rx="1.5" fill="#5a58c0" stroke="#2a2878"/><rect x="3" y="9" width="7" height="5" fill="#fff"/><rect x="4" y="11" width="2" height="1" fill="#222"/></svg><div class="a" style="left:70px;top:0px;width:1px;height:7px;background:#b0b8c4"></div><svg class="a" style="left:76px;top:-6px" width="16" height="14" viewBox="0 0 16 14"><path d="M3 7c0-4 9-4 9 1 0 3-2 5-4 5" stroke="#9a9a9a" stroke-width="2.4" fill="none"/><rect x="1" y="2" width="7" height="6" fill="#9a9a9a"/></svg><svg class="a" style="left:97px;top:-6px" width="16" height="14" viewBox="0 0 16 14"><path d="M13 7c0-4-9-4-9 1 0 3 2 5 4 5" stroke="#9a9a9a" stroke-width="2.4" fill="none"/><rect x="8" y="2" width="7" height="6" fill="#9a9a9a"/></svg><div class="a" style="left:120px;top:0px;width:1px;height:7px;background:#b0b8c4"></div><svg class="a" style="left:125px;top:-6px" width="15" height="14" viewBox="0 0 15 14"><path d="M4 0l6 9M11 0l-6 9" stroke="#999" stroke-width="1.6"/><circle cx="4" cy="11" r="2.2" fill="none" stroke="#999" stroke-width="1.5"/><circle cx="11" cy="11" r="2.2" fill="none" stroke="#999" stroke-width="1.5"/></svg><svg class="a" style="left:145px;top:-6px" width="16" height="14" viewBox="0 0 16 14"><rect x="0.5" y="0.5" width="9" height="11" fill="#aaa" stroke="#999"/><rect x="5.5" y="2.5" width="9" height="11" fill="#a4a4a4" stroke="#999"/><path d="M7 6h6M7 8h6M7 10h6" stroke="#c8c8c8"/></svg><svg class="a" style="left:165px;top:-6px" width="16" height="14" viewBox="0 0 16 14"><rect x="0.5" y="0.5" width="9" height="13" fill="#a4a4a4" stroke="#999"/><rect x="6.5" y="2.5" width="8" height="11" fill="#aaa" stroke="#999"/><path d="M8 6h5M8 8h5M8 10h5" stroke="#c8c8c8"/></svg><div class="a" style="left:188px;top:0px;width:1px;height:7px;background:#b0b8c4"></div><svg class="a" style="left:194px;top:-7px" width="16" height="15" viewBox="0 0 16 15"><circle cx="8" cy="7" r="7" fill="#8a8a8a" stroke="#6a6a6a"/><path d="M3 7l5-4v2.5h4v3H8V11z" fill="#fff"/></svg><svg class="a" style="left:216px;top:1px" width="6" height="4" viewBox="0 0 6 4"><path d="M0 0h6l-3 3.5z" fill="#8a8a8a"/></svg><svg class="a" style="left:227px;top:-7px" width="16" height="15" viewBox="0 0 16 15"><circle cx="8" cy="7" r="7" fill="#8a8a8a" stroke="#6a6a6a"/><path d="M13 7L8 3v2.5H4v3h4V11z" fill="#fff"/></svg><svg class="a" style="left:248px;top:1px" width="6" height="4" viewBox="0 0 6 4"><path d="M0 0h6l-3 3.5z" fill="#8a8a8a"/></svg><div class="a" style="left:263px;top:0px;width:1px;height:7px;background:#b0b8c4"></div><svg class="a" style="left:270px;top:-6px" width="16" height="14" viewBox="0 0 16 14"><rect x="2" y="0" width="11" height="6" rx="3" fill="#3ab83a"/><rect x="0.5" y="5.5" width="4" height="7" rx="1" fill="#3ab83a" stroke="#1a6a1a"/><rect x="2.5" y="6.5" width="13" height="7" fill="#f0f4ff" stroke="#4a4a9a"/><text x="4" y="12.5" font-size="5.5" font-family="Liberation Sans" font-weight="bold" fill="#2a2a8a">SQL</text></svg><svg class="a" style="left:291px;top:1px" width="6" height="4" viewBox="0 0 6 4"><path d="M0 0h6l-3 3.5z" fill="#111"/></svg><div class="a" style="left:304px;top:0px;width:1px;height:7px;background:#b0b8c4"></div><svg class="a" style="left:311px;top:-6px" width="16" height="14" viewBox="0 0 16 14"><circle cx="8" cy="2" r="2.5" fill="#3ab83a"/><rect x="0.5" y="5.5" width="15" height="8" fill="#d8d8f4" stroke="#5a58b0"/><text x="1.5" y="12" font-size="5.5" font-family="Liberation Sans" font-weight="bold" fill="#3a3a8a">0101</text></svg><svg class="a" style="left:331px;top:-6px" width="16" height="14" viewBox="0 0 16 14"><circle cx="5" cy="2" r="2.5" fill="#3ab83a"/><circle cx="11" cy="2" r="2.5" fill="#3ab83a"/><rect x="0.5" y="5.5" width="15" height="8" fill="#d8d8f4" stroke="#5a58b0"/><text x="1.5" y="12" font-size="5.5" font-family="Liberation Sans" font-weight="bold" fill="#3a3a8a">0101</text></svg><svg class="a" style="left:351px;top:-6px" width="16" height="14" viewBox="0 0 16 14"><rect x="4" y="0" width="8" height="6" fill="#aaa"/><rect x="0.5" y="5.5" width="15" height="8" fill="#bbb" stroke="#aaa"/></svg><svg class="a" style="left:371px;top:-6px" width="16" height="14" viewBox="0 0 16 14"><path d="M8 0l8 13H0z" fill="#c03aa0" stroke="#7a1a6a"/><circle cx="7" cy="5" r="3" fill="#222"/><path d="M2 8h12" stroke="#fff" stroke-width="0.8"/></svg><svg class="a" style="left:393px;top:1px" width="6" height="4" viewBox="0 0 6 4"><path d="M0 0h6l-3 3.5z" fill="#111"/></svg><div class="a" style="left:406px;top:0px;width:1px;height:7px;background:#b0b8c4"></div><svg class="a" style="left:413px;top:-6px" width="14" height="14" viewBox="0 0 14 14"><path d="M0.5 0.5L13 7 0.5 13.5z" fill="#3ac83a" stroke="#1a7a1a"/></svg><svg class="a" style="left:434px;top:1px" width="6" height="4" viewBox="0 0 6 4"><path d="M0 0h6l-3 3.5z" fill="#111"/></svg><svg class="a" style="left:445px;top:-6px" width="16" height="14" viewBox="0 0 16 14"><ellipse cx="8" cy="7.5" rx="6" ry="6" fill="#e04818" stroke="#902808"/><path d="M1 6h3M12 6h3M1 10h3M12 10h3" stroke="#444"/><circle cx="6" cy="6" r="1" fill="#fff"/></svg><svg class="a" style="left:467px;top:1px" width="6" height="4" viewBox="0 0 6 4"><path d="M0 0h6l-3 3.5z" fill="#111"/></svg>
<svg class="a" style="left:8px;top:39px" width="15" height="15" viewBox="0 0 15 15"><path d="M5 1h5v4h4v5h-4v4h-5v-4h-4v-5h4z" fill="#22c91e" stroke="#0f7a10" stroke-width="1"/><path d="M6 2h3v4h4v1h-4v0h-3z" fill="#8ff07a"/></svg><svg class="a" style="left:29px;top:45px" width="6" height="4" viewBox="0 0 6 4"><path d="M0 0h6l-3 3.5z" fill="#111"/></svg><svg class="a" style="left:40px;top:39px" width="15" height="15" viewBox="0 0 15 15"><path d="M1 8V4c0-2 1-3 3-3h3v3H5v4z" fill="#9a9a9a"/><path d="M2 12l4-4 1 2z" fill="#8a8a8a"/><path d="M14 7v4c0 2-1 3-3 3H8v-3h2V7z" fill="#9a9a9a"/><path d="M13 3l-4 4-1-2z" fill="#8a8a8a"/><path d="M6 4a4 4 0 0 1 6 3M9 11a4 4 0 0 1-6-3" stroke="#a0a0a0" stroke-width="2.5" fill="none"/></svg><svg class="a" style="left:61px;top:41px" width="14" height="14" viewBox="0 0 14 14"><path d="M0 1h13l-5 5v7h-3v-7z" fill="#9a9a9a"/></svg><svg class="a" style="left:80px;top:39px" width="15" height="15" viewBox="0 0 15 15"><rect x="1" y="1" width="8" height="7" rx="1" fill="#cfe0fb" stroke="#3f74d8"/><rect x="2" y="3" width="6" height="1" fill="#3f74d8"/><rect x="5" y="6" width="9" height="8" rx="1" fill="#cfe0fb" stroke="#3f74d8"/><rect x="7" y="9" width="5" height="2" fill="#3f74d8"/></svg>
<svg class="a" style="left:249px;top:41px" width="15" height="13" viewBox="0 0 15 13"><path d="M2 2h4v2h3V2h4l2 8H0z" fill="#3a3a3a"/><path d="M3 2.5h2v3H3zM10 2.5h2v3h-2z" fill="#888"/><circle cx="3.8" cy="9" r="3.5" fill="#1b7ae8" stroke="#222" stroke-width="0.8"/><circle cx="11.2" cy="9" r="3.5" fill="#1b7ae8" stroke="#222" stroke-width="0.8"/><circle cx="3" cy="8" r="1" fill="#9fd0ff"/><circle cx="10.4" cy="8" r="1" fill="#9fd0ff"/></svg><svg class="a" style="left:266px;top:46px" width="6" height="4" viewBox="0 0 6 4"><path d="M0 0h6l-3 3.5z" fill="#111"/></svg><svg class="a" style="left:433px;top:40px" width="15" height="15" viewBox="0 0 15 15"><path d="M5 1h5v7h4l-6.5 6.5L1 8h4z" fill="#e4e4e4" stroke="#9a9a9a"/></svg><svg class="a" style="left:449px;top:40px" width="15" height="15" viewBox="0 0 15 15"><path d="M5 14h5V7h4L7.5 0.5 1 7h4z" fill="#e4e4e4" stroke="#9a9a9a"/></svg><svg class="a" style="left:472px;top:40px" width="16" height="15" viewBox="0 0 16 15"><path d="M1 2v2M1 12v2" stroke="#1a3ac8" stroke-width="1.5"/><path d="M4 3h5M4 13h9" stroke="#333" stroke-width="1.2"/><path d="M9 0h4v5h2.5l-4.5 5-4.5-5H9z" fill="#2a9af0" stroke="#1a5ab8" stroke-width="0.8"/></svg><svg class="a" style="left:494px;top:40px" width="16" height="15" viewBox="0 0 16 15"><path d="M6 8l6-6 3 3-6 6z" fill="#f0a030" stroke="#a05a10" stroke-width="0.8"/><path d="M1 14l5-6 3 3z" fill="#f8e070" stroke="#b09020" stroke-width="0.8"/></svg><svg class="a" style="left:512px;top:40px" width="16" height="15" viewBox="0 0 16 15"><path d="M1 13l5-6 7-6 2 3-6 6z" fill="#9a9a9a"/><path d="M6 7l6 6" stroke="#aaa" stroke-width="2"/></svg><div class="a" style="left:535px;top:43px;width:1px;height:8px;background:#b8b8b8"></div><svg class="a" style="left:541px;top:40px" width="16" height="15" viewBox="0 0 16 15"><rect x="1.5" y="0.5" width="14" height="12" rx="1" fill="#e8f0ff" stroke="#3a6ad8"/><rect x="2" y="1" width="13" height="3" fill="#5a8ae8"/><text x="5" y="11" font-size="5.5" font-family="Liberation Sans" font-weight="bold" fill="#222">123</text><circle cx="3" cy="12" r="2.5" fill="#111"/></svg><svg class="a" style="left:561px;top:40px" width="16" height="15" viewBox="0 0 16 15"><path d="M4 1.5c-1.5 0-1.5 1-1.5 2.5v2c0 1-0.5 1.5-1.5 1.5 1 0 1.5 0.5 1.5 1.5v2c0 1.5 0 2.5 1.5 2.5M12 1.5c1.5 0 1.5 1 1.5 2.5v2c0 1 0.5 1.5 1.5 1.5-1 0-1.5 0.5-1.5 1.5v2c0 1.5 0 2.5-1.5 2.5" stroke="#222" stroke-width="1.1" fill="none"/><path d="M5.5 11h1M7.5 11h1M9.5 11h1" stroke="#222" stroke-width="1.2"/></svg><svg class="a" style="left:581px;top:40px" width="16" height="15" viewBox="0 0 16 15"><rect x="0.5" y="0.5" width="12" height="10" rx="1" fill="#e8f0ff" stroke="#3a6ad8"/><rect x="1" y="1" width="11" height="2" fill="#5a8ae8"/><path d="M5 5h5v3l-2-1.5-3 2z" fill="#2aa82a"/><rect x="9.5" y="8.5" width="5" height="6" fill="#fff" stroke="#555"/></svg><svg class="a" style="left:601px;top:40px" width="16" height="15" viewBox="0 0 16 15"><rect x="0.5" y="2.5" width="14" height="10" rx="1" fill="#e8f0ff" stroke="#3a6ad8"/><rect x="1" y="3" width="13" height="2" fill="#5a8ae8"/><path d="M3 9h8v-2l4 3-4 3v-2H3z" fill="#2ab82a" stroke="#107a10" stroke-width="0.5"/></svg><svg class="a" style="left:622px;top:40px" width="16" height="15" viewBox="0 0 16 15"><path d="M8 1h7M8 3h7M10 5h5M10 7h5M10 9h5M10 11h5M10 13h5" stroke="#333" stroke-width="1"/><path d="M1 1h3v9h3V8l4 3.5-4 3.5v-2H1z" fill="#2ab82a" stroke="#106a10" stroke-width="0.8"/></svg><div class="a" style="left:644px;top:43px;width:1px;height:8px;background:#b8b8b8"></div><svg class="a" style="left:652px;top:40px" width="10" height="15" viewBox="0 0 10 15"><path d="M0.5 0.5h8v14l-4-4-4 4z" fill="#9a9ae0" stroke="#5050a0"/></svg><svg class="a" style="left:670px;top:40px" width="16" height="15" viewBox="0 0 16 15"><path d="M1 0h4v14H1zM7 0h3v6h3v3l-3 3-3-3z" fill="#9a9a9a"/></svg><svg class="a" style="left:690px;top:40px" width="16" height="15" viewBox="0 0 16 15"><path d="M1 0h4v14H1zM7 14h3V8h3V5l-3-3-3 3z" fill="#9a9a9a"/></svg><svg class="a" style="left:710px;top:40px" width="16" height="15" viewBox="0 0 16 15"><path d="M1 0h4v14H1zM7 3h6v11H7z" fill="#9a9a9a"/></svg><div class="a" style="left:733px;top:43px;width:1px;height:8px;background:#b8b8b8"></div><svg class="a" style="left:740px;top:40px" width="16" height="15" viewBox="0 0 16 15"><rect x="0.5" y="0.5" width="14" height="13" fill="#e8f0ff" stroke="#4a6ab8"/><rect x="3" y="3" width="9" height="3" fill="#3a6ad8"/><rect x="2" y="8" width="11" height="3" fill="#f0a030" stroke="#905010" stroke-width="0.6"/></svg><svg class="a" style="left:760px;top:40px" width="16" height="15" viewBox="0 0 16 15"><rect x="0.5" y="0.5" width="14" height="13" fill="#eeeef8" stroke="#7a7aa8"/><path d="M3 3h4M9 3h3" stroke="#3a6ad8" stroke-width="1.2"/><path d="M3 7h2M6 7h2M9 7h2M3 10h2M6 10h2M9 10h2" stroke="#aaa"/></svg>
<svg class="a" style="left:6px;top:19px" width="15" height="15" viewBox="0 0 15 15"><rect x="0.5" y="6.5" width="9" height="8" fill="#dce8fa" stroke="#8fb0e8"/><rect x="2.5" y="4.5" width="9" height="8" fill="#e4eefc" stroke="#7aa3e6"/><rect x="4.5" y="0.5" width="10" height="10" fill="#f4f8ff" stroke="#6a98e4"/><rect x="5" y="1" width="9" height="2" fill="#9cc0f4"/><rect x="7" y="5" width="5" height="3" fill="#ccc" stroke="#777" stroke-width="0.7"/></svg>
<svg class="a" style="left:92px;top:19px" width="15" height="15" viewBox="0 0 15 15"><path d="M1 3v9c0 1.5 2.5 2.5 5.5 2.5S12 13.5 12 12V3z" fill="#6a6fb0" stroke="#3a3d70"/><ellipse cx="6.5" cy="3" rx="5.5" ry="2.2" fill="#c9cbee" stroke="#3a3d70"/><path d="M3 5v8" stroke="#b8bbe6" stroke-width="1.5"/><rect x="3" y="8" width="5" height="4" fill="#f0a81c" stroke="#333" stroke-width="0.8"/><path d="M8 7h4c1.5 0 2.5 1 2.5 2.5V14h-2v-3H8z" fill="#b8b8b8" stroke="#222" stroke-width="0.8"/></svg>
<svg class="a" style="left:244px;top:19px" width="14" height="14" viewBox="0 0 14 14"><rect x="0.5" y="0.5" width="12.5" height="13" fill="#f0f0fa" stroke="#7a78b8"/><path d="M2 8h8v1.5c0 2.5-2 3.5-4 3.5s-4-1-4-3.5z" fill="#8a8a96" stroke="#555" stroke-width="0.6"/><path d="M10 9h1.5c1 0 1 2 0 2H10" stroke="#555" stroke-width="0.8" fill="none"/><ellipse cx="6" cy="8" rx="4" ry="1" fill="#d0d0d8" stroke="#555" stroke-width="0.5"/><path d="M4 2.5c1 0 1 1 0 1.5s0 1.5 0.5 1.5M7 2.5c1 0 1 1 0 1.5s0 1.5 0.5 1.5" stroke="#a05a20" stroke-width="1" fill="none"/></svg>
</body></html>
